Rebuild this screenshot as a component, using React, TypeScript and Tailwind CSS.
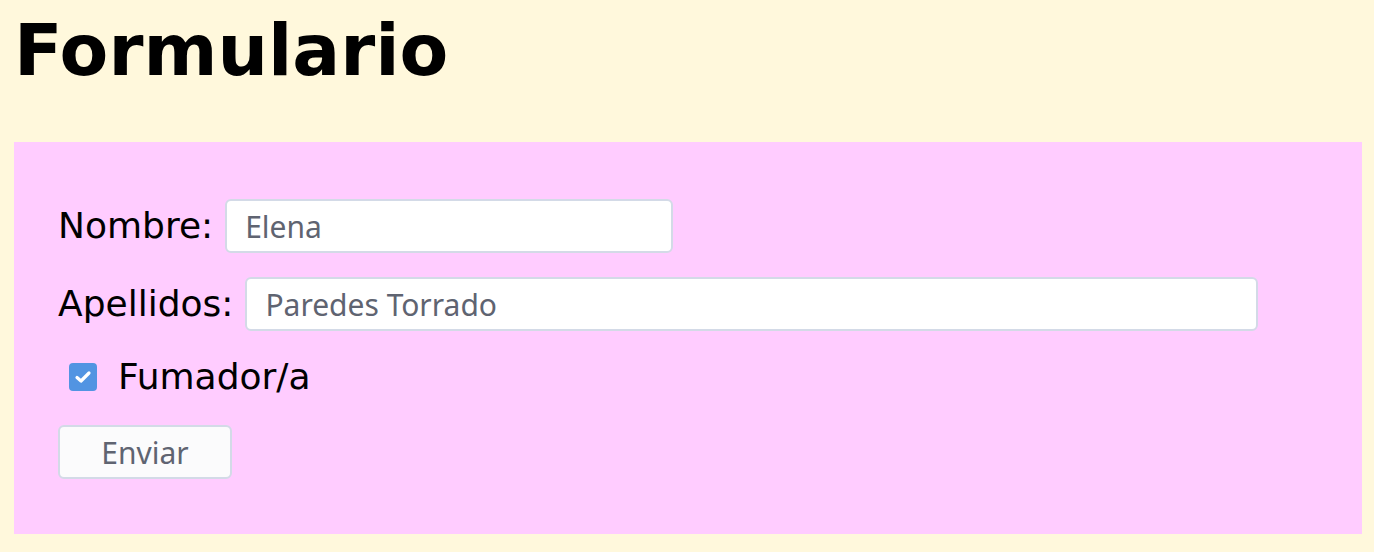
import React from "react";

export default function App() {
  return (
    <div className="min-h-[552px] bg-[#fff8dc] pl-[14px] pr-[12px] pt-[15px] pb-[18px]" style={{ fontFamily: '"DejaVu Sans", sans-serif' }}>
      <h1 className="m-0 text-[71px] font-bold leading-none text-black">Formulario</h1>
      <form className="mt-[56px] flex flex-col bg-[#ffccff] pl-[44px] pt-[57px] pb-[55px]" onSubmit={(e) => e.preventDefault()}>
        <div className="flex h-[54px] items-center gap-[12px]">
          <label className="text-[36px] leading-none text-black">Nombre:</label>
          <input
            defaultValue="Elena"
            className="h-[54px] w-[448px] rounded-[6px] border-2 border-[#d3dae7] bg-white px-[18px] text-[30px] text-[#5f6471] outline-none"
            style={{ fontFamily: '"Noto Sans", sans-serif' }}
          />
        </div>
        <div className="mt-[24px] flex h-[54px] items-center gap-[12px]">
          <label className="text-[36px] leading-none text-black">Apellidos:</label>
          <input
            defaultValue="Paredes Torrado"
            className="h-[54px] w-[1013px] rounded-[6px] border-2 border-[#d3dae7] bg-white px-[18px] text-[30px] text-[#5f6471] outline-none"
            style={{ fontFamily: '"Noto Sans", sans-serif' }}
          />
        </div>
        <div className="mt-[26px] flex h-[40px] items-center">
          <span className="relative ml-[11px] block h-[28px] w-[28px] shrink-0 rounded-[4px] bg-[#5294e2]">
            <svg className="absolute left-0 top-0 h-[28px] w-[28px]" viewBox="0 0 28 28" fill="none">
              <path d="M8 14.5 L12 18 L20 10" stroke="white" strokeWidth="3.2" strokeLinecap="round" strokeLinejoin="round" />
            </svg>
          </span>
          <span className="ml-[21px] text-[36px] leading-none text-black">Fumador/a</span>
        </div>
        <div className="mt-[28px]">
          <button
            type="submit"
            className="flex h-[54px] w-[174px] items-center justify-center rounded-[6px] border-2 border-[#d3dae7] bg-[#fbfbfc] text-[30px] text-[#5f6471]"
            style={{ fontFamily: '"Noto Sans", sans-serif' }}
          >
            Enviar
          </button>
        </div>
      </form>
    </div>
  );
}
